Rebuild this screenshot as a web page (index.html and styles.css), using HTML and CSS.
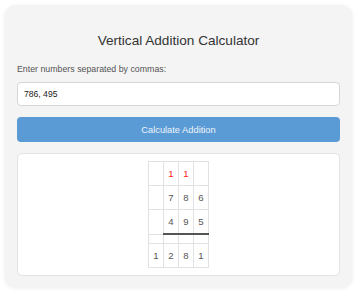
FILE: index.html
```html
<!DOCTYPE html>
<html>
<head>
<meta charset="utf-8">
<link rel="stylesheet" href="styles.css">
</head>
<body>
<div class="container">
  <h1 class="title">Vertical Addition Calculator</h1>
  <label class="label" for="nums">Enter numbers separated by commas:</label>
  <input class="input" id="nums" type="text" value="786, 495">
  <button class="btn">Calculate Addition</button>
  <div class="result">
    <table class="sum">
      <tr class="carry"><td></td><td>1</td><td>1</td><td></td></tr>
      <tr><td></td><td>7</td><td>8</td><td>6</td></tr>
      <tr><td></td><td>4</td><td>9</td><td>5</td></tr>
      <tr class="sep"><td class="blank"></td><td class="line"></td><td class="line"></td><td class="line"></td></tr>
      <tr><td>1</td><td>2</td><td>8</td><td>1</td></tr>
    </table>
  </div>
</div>
</body>
</html>
```
FILE: styles.css
```css
html, body {
  margin: 0;
  padding: 0;
  background: #ffffff;
}
body {
  padding: 5px 5px;
  font-family: "Liberation Sans", Arial, sans-serif;
}
.container {
  width: 347px;
  box-sizing: border-box;
  background: #f4f4f4;
  border-radius: 10px;
  box-shadow: 0 1px 4px rgba(0, 0, 0, 0.08);
  padding: 28px 12px 11px 12px;
  display: flex;
  flex-direction: column;
}
.title {
  margin: 0 0 15px 0;
  font-size: 13.6px;
  font-weight: normal;
  color: #333;
  text-align: center;
  line-height: 16px;
}
.label {
  font-size: 8.8px;
  color: #555;
  line-height: 11px;
  margin-bottom: 7px;
}
.input {
  height: 24px;
  box-sizing: border-box;
  border: 1px solid #d6d6d6;
  border-radius: 4px;
  background: #fff;
  padding: 0 6px;
  font-family: "Liberation Sans", Arial, sans-serif;
  font-size: 8.6px;
  color: #222;
  margin: 0 0 11px 0;
  outline: none;
}
.btn {
  height: 25px;
  border: none;
  border-radius: 4px;
  background: #5b9bd5;
  color: #eef4fb;
  font-family: "Liberation Sans", Arial, sans-serif;
  font-size: 9.3px;
  margin: 0 0 11px 0;
  padding: 0;
}
.result {
  background: #fff;
  border: 1px solid #e3e3e3;
  border-radius: 5px;
  padding: 7px 0;
  display: flex;
  justify-content: center;
}
.sum {
  border-collapse: collapse;
}
.sum td {
  width: 14px;
  height: 23px;
  padding: 0;
  border: 1px solid #e2e2e2;
  text-align: center;
  font-size: 9.6px;
  color: #555;
}
.carry td {
  color: #f22;
}
.sep td {
  height: 8px;
}
.sep td.line {
  border-top: 2px solid #555;
}
```
